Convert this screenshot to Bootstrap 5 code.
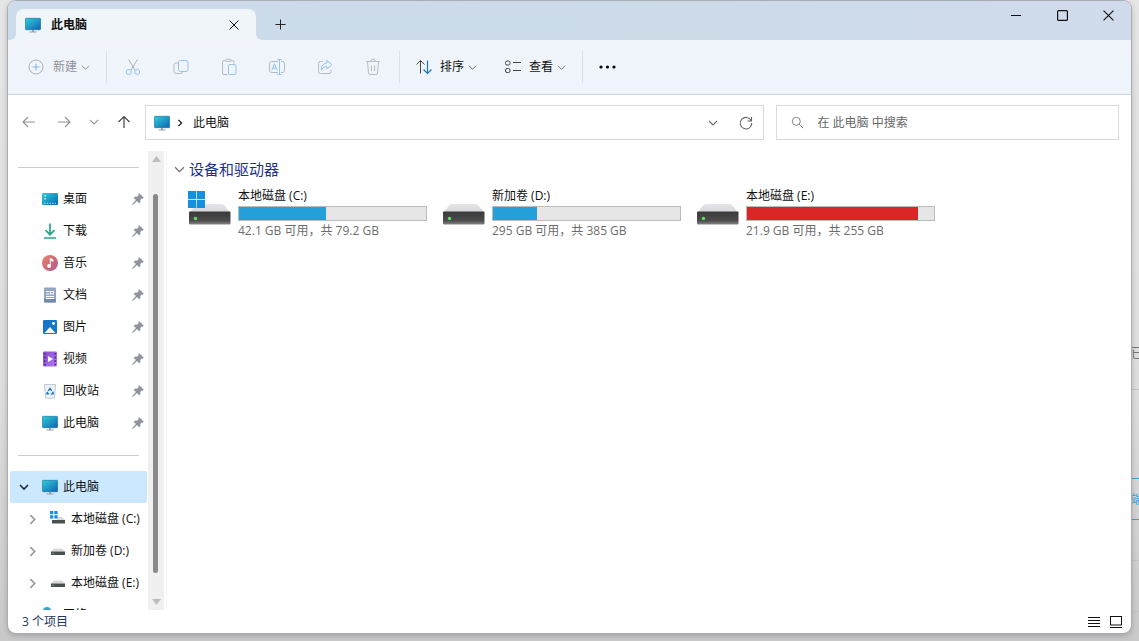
<!DOCTYPE html>
<html lang="zh-CN">
<head>
<meta charset="utf-8">
<meta name="viewport" content="width=device-width, initial-scale=1">
<title>此电脑</title>
<link href="https://cdn.jsdelivr.net/npm/bootstrap@5.3.0/dist/css/bootstrap.min.css" rel="stylesheet">
<script src="https://cdn.jsdelivr.net/npm/bootstrap@5.3.0/dist/js/bootstrap.bundle.min.js" defer></script>
<style>
body { font: 12px/16px "Open Sans", "Noto Sans CJK SC", sans-serif; color: #111; background: linear-gradient(#e6e6e7, #dedede 60%, #c9c9c9); overflow: hidden; }
button { background: none; border: 0; padding: 0; color: inherit; }
svg { display: block; flex: none; }
a { color: inherit; text-decoration: none; }
.desk { padding: 1px 8px 8px 8px; }
.win { background: #fff; border-radius: 8px; box-shadow: 0 0 0 1px #a9aeb5, 0 2px 6px rgba(0,0,0,.25); }
/* page that shows beside the window */
.behind { right: 0; top: 0; bottom: 0; width: 8px; }
.behind > * { position: absolute; left: 0; right: 0; overflow: hidden; white-space: nowrap; }
.behind hr { margin: 0; border-top: 1px solid #c4c4c4; opacity: 1; }
.behind .cyan { top: 478px; height: 42px; border: solid #3aa3d2; border-width: 1px 0; color: #3aa3d2; line-height: 42px; }
.behind .word { top: 344px; color: #777; font-size: 13px; }
.titlebar { background: linear-gradient(90deg, #ccdcea, #cddbe9 60%, #d0dbeb); height: 39px; }
.wtab { width: 240px; height: 31px; margin-left: 8px; padding: 0 17px 0 9px; background: #f0f5fa; border-radius: 8px 8px 0 0; font-weight: 700; position: relative; }
.wtab::before, .wtab::after { content: ""; position: absolute; bottom: 0; width: 6px; height: 6px; }
.wtab::before { right: 100%; background: radial-gradient(circle at 0 0, transparent 6px, #f0f5fa 6px); }
.wtab::after { left: 100%; background: radial-gradient(circle at 100% 0, transparent 6px, #f0f5fa 6px); }
.tab-name { padding-left: 10px; }
.plus { width: 48px; height: 31px; }
.wctl { width: 46px; height: 29px; }
.tools { height: 55px; background: linear-gradient(#f0f4f9, #eff4fd); border-bottom: 1px solid #c6d1de; }
.tools button { height: 36px; }
.tb-first { padding: 0 14px 0 20px; color: #8d9298; gap: 9px; }
.tb-text { padding: 0 14px; gap: 8px; }
.tb-icon { width: 48px; }
.tb-more { width: 44px; }
.vsep { width: 1px; height: 32px; margin: 0 2px; background: #dae0e7; }
.addr-row { padding: 10px 12px 11px 13px; }
.boxed { height: 35px; border: 1px solid #d9d9d9; background: #fff; }
.arrows { width: 124px; height: 33px; }
.arrows button { width: 16px; }
.path-box { flex: 21 1 0; padding: 0 9px 0 8px; }
.path-sep { margin: 0 9px 0 6px; }
.find-box { flex: 11 1 0; margin-left: 12px; padding: 0 12px 0 14px; }
.find-box input { border: 0; outline: 0; padding: 0; margin-left: 13px; color: #666; }
.find-box input::placeholder { color: #666; opacity: 1; }
.side { width: 140px; }
.side hr { margin: 0 9px 0 10px; border-top: 1px solid #ccc; opacity: 1; }
.side ul { margin: 15px 0 16px; }
.side ul.tree { margin: 15px 0 0; }
.side-link { height: 32px; margin: 0 1px 0 2px; padding: 0 3px 0 32px; white-space: nowrap; gap: 5px; }
.side-link.top-node { padding-left: 8px; background: #cce8ff; border-radius: 2px; }
.side-link.top-node svg:first-child { margin-right: 7px; }
.side-link.sub { padding: 0 0 0 17px; }
.side-link.sub svg:first-child { margin-right: 7px; }
.sbar { width: 16px; background: #f0f0f0; }
.sbar button { height: 16px; }
.strack { padding: 27px 6px 21px 5px; }
.sthumb { background: #8a8a8a; border-radius: 3px; }
.files { margin-left: 2px; border-left: 1px solid #f5f5f5; padding: 9px 0 0 7px; }
.group { font-size: 15px; line-height: 18px; color: #1e3287; gap: 4px; }
.drives { padding: 10px 0 0 14px; }
.drive { width: 254px; gap: 7px; }
.drive-art { padding-top: 2px; }
.win-mark { left: 0; top: 3px; }
.drive .info { width: 189px; }
.drive .progress { height: 15px; border-radius: 0; background: #e6e6e6; border: 1px solid #bcbcbc; margin: 2px 0; }
.drive .progress-bar { background: #26a0da; }
.drive .full .progress-bar { background: #da2626; }
.muted { color: #6d6d6d; }
.pale { color: #999; }
.status { height: 23px; padding: 0 9px 0 14px; color: #1e395b; gap: 10px; }
</style>
</head>
<body>
<svg width="0" height="0" class="position-absolute" aria-hidden="true">
<defs>
<linearGradient id="gPc" x1="0" y1="0" x2="1" y2="1"><stop offset="0" stop-color="#2fd0d6"/><stop offset="1" stop-color="#0e62b4"/></linearGradient>
<linearGradient id="gMu" x1="0" y1="0" x2="1" y2="1"><stop offset="0" stop-color="#ee8466"/><stop offset="1" stop-color="#b0578f"/></linearGradient>
<linearGradient id="gDk" x1="0" y1="0" x2="0" y2="1"><stop offset="0" stop-color="#393939"/><stop offset=".7" stop-color="#4c4c4c"/><stop offset="1" stop-color="#858585"/></linearGradient>
<linearGradient id="gDt" x1="0" y1="0" x2="0" y2="1"><stop offset="0" stop-color="#e6e6e8"/><stop offset="1" stop-color="#d5d5da"/></linearGradient>
<linearGradient id="gVi" x1="0" y1="0" x2="1" y2="1"><stop offset="0" stop-color="#8a4ccc"/><stop offset="1" stop-color="#b07af0"/></linearGradient>
<symbol id="pc" viewBox="0 0 16 16"><rect x=".3" y="1.3" width="15.4" height="11.4" rx="1" fill="url(#gPc)" stroke="#17679c" stroke-width=".6"/><path d="M7 13h2v1.6h2.5v.9h-7v-.9H7z" fill="#93a1ae"/></symbol>
<symbol id="desk" viewBox="0 0 16 16"><rect y="2" width="16" height="12" rx="1.3" fill="url(#gPc)"/><path d="M2.5 4.300h1.300v1.300H2.500zM2.500 7.300h1.300v1.300H2.500z" fill="#fff"/><path d="M2 12.300h12" stroke="#bfeaff" stroke-dasharray="1.500 1.200" stroke-width=".9"/></symbol>
<symbol id="down" viewBox="0 0 16 16"><path d="M8 .5v11M3.500 7.200 8 11.700l4.500-4.500M2 15h12" fill="none" stroke="#26a58b" stroke-width="1.700"/></symbol>
<symbol id="music" viewBox="0 0 16 16"><circle cx="8" cy="8" r="8" fill="url(#gMu)"/><path d="M8.300 3v7.800M8.300 3.500l2.700 1.200v1.600L8.300 5.200" fill="#fff" stroke="#fff" stroke-width=".9"/><circle cx="7" cy="11" r="1.900" fill="#fff"/></symbol>
<symbol id="doc" viewBox="0 0 16 16"><rect x="2" y=".5" width="12" height="15" rx="1" fill="#93a5c2"/><path d="M2 12h12v2.500a1 1 0 0 1-1 1H3a1 1 0 0 1-1-1z" fill="#7489aa"/><path d="M4 4.500h3.500M4 7h3.500M4 9.500h8M4 11.500h8" stroke="#fff"/><rect x="8.500" y="4.500" width="3" height="2.500" fill="none" stroke="#fff"/></symbol>
<symbol id="pic" viewBox="0 0 16 16"><rect x="1" y="1" width="14" height="14" rx="1.300" fill="#1576c5"/><path d="m2.500 14 5.500-6 5.500 6z" fill="#f4faff"/><circle cx="11.500" cy="4.500" r="1.400" fill="#fff"/></symbol>
<symbol id="vid" viewBox="0 0 16 16"><rect x="1" y=".5" width="14" height="15" rx="1.300" fill="url(#gVi)"/><path d="M2.900 2v12.500M13.100 2v12.500" stroke="#4a2590" stroke-width="1.500" stroke-dasharray="1.800 1.800"/><path d="m6 5 5 3-5 3z" fill="#fff"/></symbol>
<symbol id="bin" viewBox="0 0 16 16"><path d="M2.300 1.500h11.400l-1.300 13.700H3.600z" fill="#edf1f4" stroke="#b8bfc5" stroke-width=".8"/><path d="m6.300 7.800 1.700-2.400 1.700 2.400M10.600 8.700l.7 2.200H8.700M7.200 10.900H4.900l.8-2.100" fill="none" stroke="#1a7ac8" stroke-width="1.400"/></symbol>
<symbol id="pin" viewBox="0 0 12 12"><path d="M7.300.6 11.400 4.700l-.8.700-.9-.1L8 7l.2 2.200-1 .9-2.300-2.300L1.600 11l-1 .4.400-1L4.200 7.100 1.900 4.800l1-.9 2.200.1 1.700-1.700-.2-.9z" fill="#8b949c" stroke="#8b949c" stroke-width=".5"/></symbol>
<symbol id="mini" viewBox="0 0 16 16"><path d="M4 5.500h8l3 3H1z" fill="#dadadd"/><path d="M1 8.500h14V12H1z" fill="#4b4f50"/><path d="M2.500 10.300h1.500" stroke="#45c965"/></symbol>
<symbol id="miniwin" viewBox="0 0 16 16"><path d="M7 6h5l3 3H7z" fill="#dadadd"/><path d="M2 9h13v3.500H2z" fill="#4b4f50"/><path d="M0 0h3.300v3.300H0zM4.300 0h3.300v3.300H4.300zM0 4.300h3.300v3.300H0zM4.300 4.300h3.300v3.300H4.300z" fill="#168fdf"/></symbol>
<symbol id="hdd" viewBox="0 0 43 36"><path d="M10 14h23q2 0 3.500 1.500l6 7.500H1l6-7.500Q8 14 10 14z" fill="url(#gDt)"/><rect x="1" y="21.500" width="41.500" height="13" rx="1" fill="url(#gDk)"/><circle cx="7.500" cy="28.500" r="1.700" fill="#5ee05e"/></symbol>
<symbol id="winlogo" viewBox="0 0 17 17"><path d="M0 0h8.200v8.200H0zM8.900 0H17v8.200H8.900zM0 8.900h8.200V17H0zM8.900 8.900H17V17H8.900z" fill="#1590de"/></symbol>
<symbol id="cdown" viewBox="0 0 10 10"><path d="m1 3 4 4 4-4" fill="none" stroke="currentColor" stroke-width="1.100"/></symbol>
<symbol id="cright" viewBox="0 0 10 10"><path d="m3 1 4 4-4 4" fill="none" stroke="currentColor" stroke-width="1.500"/></symbol>
<symbol id="x" viewBox="0 0 10 10"><path d="m.5.5 9 9m0-9-9 9" stroke="currentColor" stroke-width="1"/></symbol>
</defs>
</svg>

<div class="behind position-absolute" aria-hidden="true">
  <div class="word">已</div>
  <hr style="top:389px"><div class="cyan">端</div><hr style="top:560px"><hr style="top:611px">
</div>

<div class="desk vh-100 position-relative">
<div class="win h-100 d-flex flex-column overflow-hidden">
  <header class="titlebar d-flex flex-shrink-0">
    <div class="wtab d-flex align-items-center align-self-end">
      <svg width="16" height="16"><use href="#pc"/></svg>
      <span class="tab-name flex-grow-1">此电脑</span>
      <button type="button" aria-label="关闭标签页"><svg width="10" height="10"><use href="#x"/></svg></button>
    </div>
    <button type="button" class="plus d-flex align-items-center justify-content-center align-self-end" aria-label="新标签页"><svg width="11" height="11" viewBox="0 0 11 11"><path d="M5.500.5v10M.5 5.500h10" stroke="#222"/></svg></button>
    <div class="ms-auto d-flex">
      <button type="button" class="wctl d-flex align-items-center justify-content-center" aria-label="最小化"><svg width="10" height="10" viewBox="0 0 10 10"><path d="M0 4.500h10" stroke="#111"/></svg></button>
      <button type="button" class="wctl d-flex align-items-center justify-content-center" aria-label="最大化"><svg width="11" height="11" viewBox="0 0 11 11"><rect x=".6" y=".6" width="9.800" height="9.800" rx="1" fill="none" stroke="#111" stroke-width="1.200"/></svg></button>
      <button type="button" class="wctl d-flex align-items-center justify-content-center" aria-label="关闭"><svg width="11" height="11"><use href="#x"/></svg></button>
    </div>
  </header>

  <div class="tools d-flex align-items-center flex-shrink-0" role="toolbar" aria-label="命令">
    <button type="button" class="tb-first d-flex align-items-center"><svg width="16" height="16" viewBox="0 0 16 16" fill="none"><circle cx="8" cy="8" r="7" stroke="#a8b0b8"/><path d="M8 4.500v7M4.500 8h7" stroke="#82b5e0"/></svg><span class="d-flex align-items-center gap-1">新建<svg width="9" height="9"><use href="#cdown"/></svg></span></button>
    <span class="vsep"></span>
    <button type="button" class="tb-icon d-flex align-items-center justify-content-center" aria-label="剪切"><svg width="18" height="18" viewBox="0 0 18 18" fill="none"><path d="m4.500 1.500 6.700 10.800M13.500 1.500 6.800 12.300" stroke="#a8b0b8"/><circle cx="4.800" cy="14" r="2.500" stroke="#93c4ec"/><circle cx="13.200" cy="14" r="2.500" stroke="#93c4ec"/></svg></button>
    <button type="button" class="tb-icon d-flex align-items-center justify-content-center" aria-label="复制"><svg width="16" height="16" viewBox="0 0 16 16" fill="none"><path d="M5.500 4H3a2 2 0 0 0-2 2v6.500a2 2 0 0 0 2 2h4.500a2 2 0 0 0 2-2" stroke="#b4bac0"/><rect x="5.500" y="1.500" width="9.500" height="11" rx="2" stroke="#93c4ec"/></svg></button>
    <button type="button" class="tb-icon d-flex align-items-center justify-content-center" aria-label="粘贴"><svg width="16" height="18" viewBox="0 0 16 18" fill="none"><path d="M6.500 16.500H3a1.500 1.500 0 0 1-1.500-1.500V4A1.500 1.500 0 0 1 3 2.500h1.500M10 2.500h1.500A1.500 1.500 0 0 1 13 4v1.500" stroke="#b4bac0"/><rect x="4.500" y="1.300" width="5.500" height="2.200" rx="1.100" stroke="#b4bac0"/><rect x="7.500" y="6.500" width="7.500" height="10" rx="1.300" stroke="#93c4ec"/></svg></button>
    <button type="button" class="tb-icon d-flex align-items-center justify-content-center" aria-label="重命名"><svg width="18" height="18" viewBox="0 0 18 18" fill="none"><path d="M10 3.500H3.500a2 2 0 0 0-2 2v7a2 2 0 0 0 2 2H10M13 3.500h1.500a2 2 0 0 1 2 2v7a2 2 0 0 1-2 2H13" stroke="#b4bac0"/><path d="M11.500 1.500v15M9.500 1.500h4M9.500 16.500h4M3.800 12.300 6.500 5.700l2.700 6.600M4.700 10.200h3.600" stroke="#93c4ec"/></svg></button>
    <button type="button" class="tb-icon d-flex align-items-center justify-content-center" aria-label="共享"><svg width="16" height="16" viewBox="0 0 16 16" fill="none"><path d="M6 2.500H3.500a2 2 0 0 0-2 2v8a2 2 0 0 0 2 2h8.500a2 2 0 0 0 2-2V11" stroke="#b4bac0"/><path d="M9.800 1.300 15 5.700l-5.200 4.200V7.500Q6.300 7.300 4.200 11 4.500 4.500 9.800 4z" stroke="#93c4ec" stroke-linejoin="round"/></svg></button>
    <button type="button" class="tb-icon d-flex align-items-center justify-content-center" aria-label="删除"><svg width="16" height="18" viewBox="0 0 16 18" fill="none" stroke="#b8bdc3"><path d="M1 3.500h14M5.700 3.500a2.300 2.300 0 0 1 4.600 0M2.500 3.500l1 11.500a1.700 1.700 0 0 0 1.600 1.500h5.800a1.700 1.700 0 0 0 1.600-1.500l1-11.500M6.500 7.500v5.500M9.500 7.500v5.500"/></svg></button>
    <span class="vsep"></span>
    <button type="button" class="tb-text d-flex align-items-center"><svg width="16" height="16" viewBox="0 0 16 16" fill="none"><path d="M4.500 14.500v-13M.5 5.500l4-4 4 4" stroke="#444"/><path d="M11.500 1.500v13M7.500 10.500l4 4 4-4" stroke="#1976d2" stroke-width="1.200"/></svg><span class="d-flex align-items-center gap-1">排序<svg width="9" height="9" class="muted"><use href="#cdown"/></svg></span></button>
    <button type="button" class="tb-text d-flex align-items-center"><svg width="16" height="16" viewBox="0 0 16 16" fill="none" stroke="#444"><rect x=".5" y="2" width="4.500" height="4" rx="1.500"/><rect x=".5" y="9.500" width="4.500" height="4" rx="1.500"/><path d="M8 3.500h8M8 11.500h8"/></svg><span class="d-flex align-items-center gap-1">查看<svg width="9" height="9" class="muted"><use href="#cdown"/></svg></span></button>
    <span class="vsep"></span>
    <button type="button" class="tb-more d-flex align-items-center justify-content-center" aria-label="查看更多"><svg width="17" height="4" viewBox="0 0 17 4"><circle cx="2" cy="2" r="1.600"/><circle cx="8.500" cy="2" r="1.600"/><circle cx="15" cy="2" r="1.600"/></svg></button>
  </div>

  <div class="addr-row d-flex flex-shrink-0">
    <div class="arrows d-flex align-items-center">
      <button type="button" aria-label="后退"><svg width="15" height="14" viewBox="0 0 15 14" fill="none" stroke="#909090" stroke-width="1.100"><path d="M14 7H2M7 2 2 7l5 5"/></svg></button>
      <button type="button" class="ms-3 ps-1" aria-label="前进"><svg width="15" height="14" viewBox="0 0 15 14" fill="none" stroke="#909090" stroke-width="1.100"><path d="M1 7h12M8 2l5 5-5 5"/></svg></button>
      <button type="button" class="ms-3 ps-1" aria-label="最近浏览的位置"><svg width="10" height="10" class="pale"><use href="#cdown"/></svg></button>
      <button type="button" class="ms-3" aria-label="向上"><svg width="14" height="14" viewBox="0 0 14 14" fill="none" stroke="#444" stroke-width="1.200"><path d="M7 13V1.500M1.500 7 7 1.500 12.500 7"/></svg></button>
    </div>
    <nav class="path-box boxed d-flex align-items-center" aria-label="地址">
      <svg width="16" height="16"><use href="#pc"/></svg>
      <svg width="8" height="8" class="path-sep"><use href="#cright"/></svg>
      <a href="#" class="me-auto">此电脑</a>
      <button type="button" aria-label="以前的位置"><svg width="10" height="10" class="muted"><use href="#cdown"/></svg></button>
      <button type="button" class="ms-3 ps-1" aria-label="刷新"><svg width="16" height="16" viewBox="0 0 16 16" fill="none" stroke="#666" stroke-width="1.100"><path d="M13.300 5.800A5.800 5.800 0 1 0 13.800 8M13.500 2v4h-4"/></svg></button>
    </nav>
    <div class="find-box boxed d-flex align-items-center">
      <svg width="13" height="13" viewBox="0 0 13 13" fill="none" stroke="#858585"><circle cx="5.300" cy="5.300" r="4"/><path d="m8.200 8.200 4 4"/></svg>
      <input type="text" class="flex-grow-1 w-100" aria-label="搜索" placeholder="在 此电脑 中搜索">
    </div>
  </div>

  <div class="d-flex flex-grow-1 overflow-hidden">
    <nav class="side flex-shrink-0 overflow-hidden pt-3" aria-label="导航窗格">
      <hr>
      <ul class="list-unstyled">
        <li><a href="#" class="side-link d-flex align-items-center"><svg width="16" height="16"><use href="#desk"/></svg>桌面<svg width="12" height="12" class="ms-auto"><use href="#pin"/></svg></a></li>
        <li><a href="#" class="side-link d-flex align-items-center"><svg width="16" height="16"><use href="#down"/></svg>下载<svg width="12" height="12" class="ms-auto"><use href="#pin"/></svg></a></li>
        <li><a href="#" class="side-link d-flex align-items-center"><svg width="16" height="16"><use href="#music"/></svg>音乐<svg width="12" height="12" class="ms-auto"><use href="#pin"/></svg></a></li>
        <li><a href="#" class="side-link d-flex align-items-center"><svg width="16" height="16"><use href="#doc"/></svg>文档<svg width="12" height="12" class="ms-auto"><use href="#pin"/></svg></a></li>
        <li><a href="#" class="side-link d-flex align-items-center"><svg width="16" height="16"><use href="#pic"/></svg>图片<svg width="12" height="12" class="ms-auto"><use href="#pin"/></svg></a></li>
        <li><a href="#" class="side-link d-flex align-items-center"><svg width="16" height="16"><use href="#vid"/></svg>视频<svg width="12" height="12" class="ms-auto"><use href="#pin"/></svg></a></li>
        <li><a href="#" class="side-link d-flex align-items-center"><svg width="16" height="16"><use href="#bin"/></svg>回收站<svg width="12" height="12" class="ms-auto"><use href="#pin"/></svg></a></li>
        <li><a href="#" class="side-link d-flex align-items-center"><svg width="16" height="16"><use href="#pc"/></svg>此电脑<svg width="12" height="12" class="ms-auto"><use href="#pin"/></svg></a></li>
      </ul>
      <hr>
      <ul class="list-unstyled tree">
        <li><a href="#" class="side-link top-node d-flex align-items-center"><svg width="12" height="12" viewBox="0 0 12 12"><path d="m2 4 4 4 4-4" fill="none" stroke="#1c2c3c" stroke-width="1.600"/></svg><svg width="16" height="16"><use href="#pc"/></svg>此电脑</a></li>
        <li><a href="#" class="side-link sub d-flex align-items-center"><svg width="11" height="11" class="pale"><use href="#cright"/></svg><svg width="16" height="16"><use href="#miniwin"/></svg>本地磁盘 (C:)</a></li>
        <li><a href="#" class="side-link sub d-flex align-items-center"><svg width="11" height="11" class="pale"><use href="#cright"/></svg><svg width="16" height="16"><use href="#mini"/></svg>新加卷 (D:)</a></li>
        <li><a href="#" class="side-link sub d-flex align-items-center"><svg width="11" height="11" class="pale"><use href="#cright"/></svg><svg width="16" height="16"><use href="#mini"/></svg>本地磁盘 (E:)</a></li>
        <li><a href="#" class="side-link d-flex align-items-center"><svg width="16" height="16" viewBox="0 0 16 16"><circle cx="5" cy="4" r="4" fill="#3f9fd0"/><rect x="3" y="4" width="13" height="9" fill="url(#gPc)"/></svg>网络</a></li>
      </ul>
    </nav>
    <div class="sbar d-flex flex-column flex-shrink-0">
      <button type="button" class="d-flex align-items-center justify-content-center" aria-label="向上滚动"><svg width="9" height="6" viewBox="0 0 9 6"><path d="M4.500 0 9 6H0z" fill="#bdbdbd"/></svg></button>
      <div class="strack flex-grow-1 d-flex"><div class="sthumb w-100"></div></div>
      <button type="button" class="d-flex align-items-center justify-content-center" aria-label="向下滚动"><svg width="9" height="6" viewBox="0 0 9 6"><path d="M4.500 6 9 0H0z" fill="#bdbdbd"/></svg></button>
    </div>
    <main class="files flex-grow-1 overflow-hidden">
      <button type="button" class="group d-flex align-items-center"><svg width="11" height="11" class="muted"><use href="#cdown"/></svg>设备和驱动器</button>
      <div class="drives d-flex flex-wrap">
        <a href="#" class="drive d-flex">
          <span class="drive-art position-relative"><svg width="43" height="36"><use href="#hdd"/></svg><svg width="17" height="17" class="win-mark position-absolute"><use href="#winlogo"/></svg></span>
          <span class="info d-block">本地磁盘 (C:)<span class="progress" role="progressbar" aria-label="已用空间" aria-valuenow="47"><span class="progress-bar" style="width:46.5%"></span></span><span class="muted">42.1 GB 可用，共 79.2 GB</span></span>
        </a>
        <a href="#" class="drive d-flex">
          <span class="drive-art"><svg width="43" height="36"><use href="#hdd"/></svg></span>
          <span class="info d-block">新加卷 (D:)<span class="progress" role="progressbar" aria-label="已用空间" aria-valuenow="23"><span class="progress-bar" style="width:23.4%"></span></span><span class="muted">295 GB 可用，共 385 GB</span></span>
        </a>
        <a href="#" class="drive d-flex">
          <span class="drive-art"><svg width="43" height="36"><use href="#hdd"/></svg></span>
          <span class="info full d-block">本地磁盘 (E:)<span class="progress" role="progressbar" aria-label="已用空间" aria-valuenow="91"><span class="progress-bar" style="width:91.4%"></span></span><span class="muted">21.9 GB 可用，共 255 GB</span></span>
        </a>
      </div>
    </main>
  </div>

  <footer class="status d-flex align-items-center flex-shrink-0">
    <span class="me-auto">3 个项目</span>
    <button type="button" aria-label="详细信息"><svg width="12" height="12" viewBox="0 0 12 12" stroke="#111"><path d="M0 1.500h12M0 4.500h12M0 7.500h12M0 10.500h12"/></svg></button>
    <button type="button" aria-label="大图标"><svg width="12" height="12" viewBox="0 0 12 12" fill="none" stroke="#111"><rect x=".5" y=".5" width="11" height="8.500"/><path d="M0 11.500h12"/></svg></button>
  </footer>
</div>
</div>
</body>
</html>
